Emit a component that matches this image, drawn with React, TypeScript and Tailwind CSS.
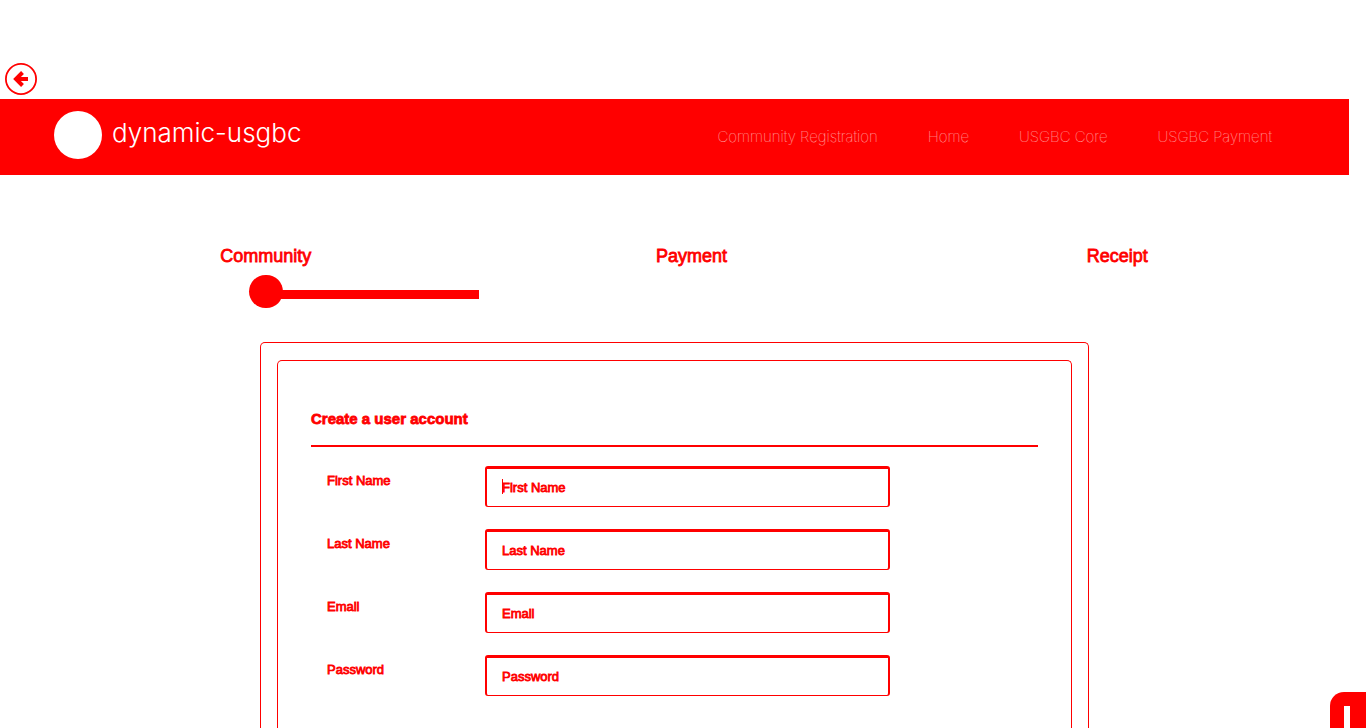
const navLinks = ["Community Registration", "Home", "USGBC Core", "USGBC Payment"];

const steps = ["Community", "Payment", "Receipt"];

const fields = [
  { id: "first-name", label: "First Name", type: "text" },
  { id: "last-name", label: "Last Name", type: "text" },
  { id: "email", label: "Email", type: "email" },
  { id: "password", label: "Password", type: "password" },
];

function TopBar() {
  return (
    <div className="flex h-[99px] shrink-0 items-end pb-1 pl-[5px]">
      <button type="button" aria-label="Back" className="h-8 w-8">
        <svg viewBox="0 0 32 32" className="h-8 w-8" fill="none" stroke="#ff0000">
          <circle cx="16" cy="16" r="15.1" strokeWidth="1.8" />
          <path d="M17.5 9.5 11 16l6.5 6.5M11 16h12" strokeWidth="4" />
        </svg>
      </button>
    </div>
  );
}

function Header() {
  return (
    <header className="flex h-[76px] shrink-0 items-center justify-between bg-[#ff0000] pr-[77px] pl-[54px] font-['Inter',sans-serif] text-white">
      <a href="#" className="flex items-center gap-[10px] pb-1">
        <span className="h-12 w-12 rounded-full bg-white" />
        <span className="pb-1 text-[26px] leading-8 font-light">dynamic-usgbc</span>
      </a>
      <nav className="flex gap-[50px] text-[15px] font-thin text-white/80">
        {navLinks.map((link) => (
          <a key={link} href="#">
            {link}
          </a>
        ))}
      </nav>
    </header>
  );
}

function Steps() {
  return (
    <ol className="mt-[71px] grid h-[96px] shrink-0 grid-cols-3 pr-[19px] pl-[53px]">
      {steps.map((step, index) => (
        <li key={step} className="flex flex-col items-center text-lg leading-5 [-webkit-text-stroke:0.8px_#ff0000]">
          {step}
          {index === 0 && (
            <div className="mt-[9px] grid w-full grid-cols-2 items-center">
              <span className="col-start-1 row-start-1 -mr-[17px] h-[33px] w-[34px] justify-self-end rounded-full bg-[#ff0000]" />
              <span className="col-start-2 row-start-1 mt-[5px] h-[9px] bg-[#ff0000]" />
            </div>
          )}
        </li>
      ))}
    </ol>
  );
}

function AccountForm() {
  return (
    <form className="mx-auto flex w-full max-w-[829px] flex-1 flex-col rounded-t-[5px] border border-b-0 border-[#ff0000] px-4 pt-[17px]">
      <div className="flex-1 rounded-t-[5px] border border-b-0 border-[#ff0000] pt-[48px] pr-[33px] pl-[33px]">
        <h2 className="border-b-2 border-[#ff0000] pb-4 text-[15px] leading-5 font-bold [-webkit-text-stroke:0.8px_#ff0000]">
          Create a user account
        </h2>
        <div className="mt-[19px] flex flex-col gap-[22px] pl-4">
          {fields.map((field, index) => (
            <div key={field.id} className="flex items-start text-[13px] [-webkit-text-stroke:0.8px_#ff0000]">
              <label htmlFor={field.id} className="w-[158px] shrink-0 pt-[7px] leading-4">
                {field.label}
              </label>
              <div className="relative w-full max-w-[405px]">
                <input
                  id={field.id}
                  type={field.type}
                  placeholder={field.label}
                  className="block h-[41px] w-full rounded-[3px] border-2 border-t-[3px] border-b border-[#ff0000] bg-white px-[15px] placeholder:text-[#ff0000] placeholder:opacity-100 focus:outline-none"
                />
                {index === 0 && <span className="absolute top-[13px] left-[17px] h-[15px] w-px bg-[#ff0000]" />}
              </div>
            </div>
          ))}
        </div>
      </div>
    </form>
  );
}

export default function App() {
  return (
    <div className="relative flex h-screen flex-col overflow-hidden bg-white pr-[17px] font-['Liberation_Sans',Arial,sans-serif] text-[#ff0000]">
      <TopBar />
      <Header />
      <main className="flex flex-1 flex-col">
        <Steps />
        <AccountForm />
      </main>
      <button
        type="button"
        aria-label="Open help"
        className="fixed right-0 bottom-0 h-9 w-9 rounded-tl-[14px] bg-[#ff0000] pt-[14px] pl-[14px]"
      >
        <span className="block h-[22px] w-[6px] bg-white" />
      </button>
    </div>
  );
}
